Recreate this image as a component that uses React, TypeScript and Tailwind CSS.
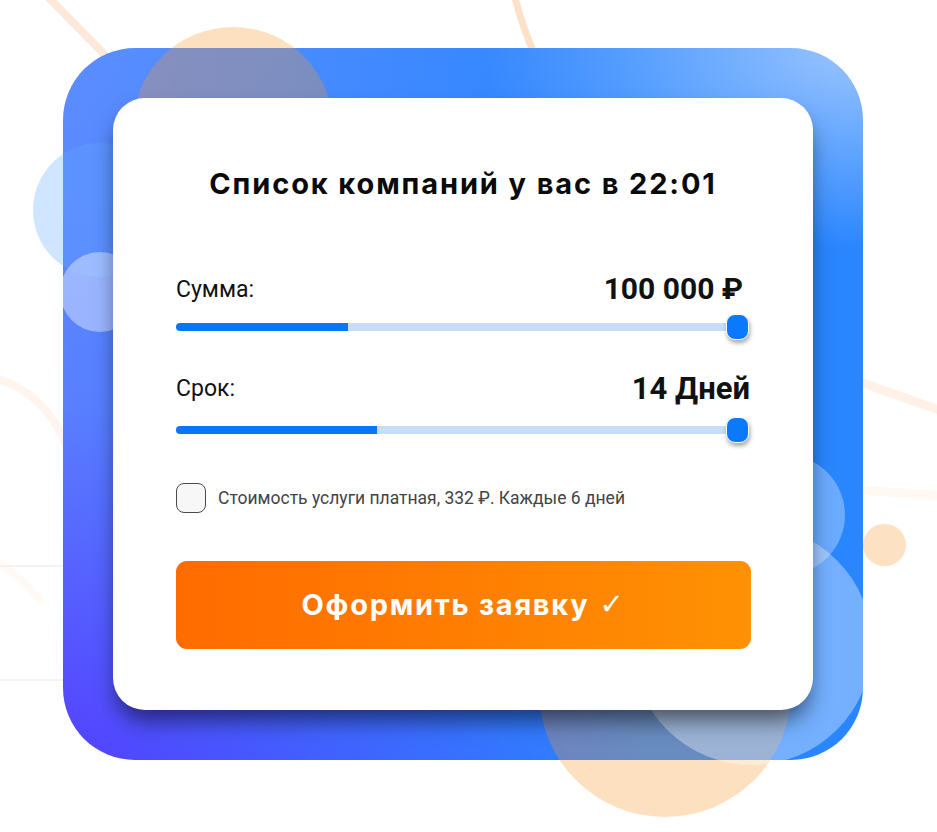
import React from "react";

function Slider({ filled }: { filled: number }) {
  return (
    <div className="relative h-[26px] w-full flex items-center">
      <div className="flex h-[8px] w-[568px]">
        <div className="h-full rounded-l-full bg-[#0a76f5]" style={{ width: filled }} />
        <div className="h-full flex-1 rounded-r-full bg-[#c8ddf8]" />
      </div>
      <div className="absolute right-[1px] top-0 h-[26px] w-[23px] rounded-[9px] border border-white bg-[#0a79fb] shadow-[1px_3px_4px_rgba(0,0,0,0.35)]" />
    </div>
  );
}

export default function App() {
  return (
    <div className="relative w-[937px] h-[832px] overflow-hidden bg-white pt-[48px] pl-[63px]">
      {/* faint background strokes */}
      <svg className="absolute left-0 top-0" width="937" height="832" viewBox="0 0 937 832" fill="none">
        <path d="M45 -6 L112 62" stroke="#fde9dc" strokeWidth="8" strokeLinecap="round" />
        <path d="M514 -6 Q522 26 536 58" stroke="#fde0c8" strokeWidth="7" strokeLinecap="round" />
        <path d="M860 382 L945 412" stroke="#fff1e7" strokeWidth="9" strokeLinecap="round" />
        <path d="M860 490 Q900 493 945 496" stroke="#fff8f3" strokeWidth="9" strokeLinecap="round" />
        <path d="M-6 378 Q45 392 66 445" stroke="#fff5ee" strokeWidth="8" strokeLinecap="round" />
        <path d="M-6 560 Q20 575 40 600" stroke="#fffaf6" strokeWidth="8" strokeLinecap="round" />
        <path d="M0 566 L63 566" stroke="#efefef" strokeWidth="1.5" />
        <path d="M0 680 L63 680" stroke="#efefef" strokeWidth="1.5" />
      </svg>

      {/* small peach dot */}
      <div className="absolute left-[863px] top-[524px] h-[42px] w-[43px] rounded-full bg-[#fde1c3]" />

      {/* translucent circles between frame and card */}
      <div className="absolute z-10 left-[133px] top-[27px] h-[200px] w-[200px] rounded-full bg-[rgba(248,153,48,0.3)]" />
      <div className="absolute z-10 left-[33px] top-[143px] h-[134px] w-[134px] rounded-full bg-[rgba(100,170,255,0.3)]" />
      <div className="absolute z-10 left-[60px] top-[252px] h-[80px] w-[80px] rounded-full bg-[rgba(255,255,255,0.4)]" />
      <div className="absolute z-10 left-[539px] top-[565px] h-[252px] w-[252px] rounded-full bg-[rgba(248,153,48,0.3)]" />
      <div className="absolute z-10 left-[725px] top-[455px] h-[120px] w-[120px] rounded-full bg-[rgba(255,255,255,0.3)]" />
      <div className="absolute z-10 left-[632px] top-[525px] h-[240px] w-[240px] rounded-full bg-[rgba(255,255,255,0.35)]" />

      {/* frame */}
      <div className="relative w-[800px] h-[712px] rounded-[72px] p-[50px] bg-[radial-gradient(ellipse_380px_200px_at_100%_0%,rgba(175,208,255,0.85),rgba(175,208,255,0)_100%),linear-gradient(to_right,rgba(42,134,255,0)_0%,rgba(42,134,255,1)_72%),linear-gradient(to_bottom,#5c8eff_0%,#5a7fff_50%,#5440ff_100%)]">
        <div className="relative z-20 flex h-[612px] w-[700px] flex-col rounded-[32px] bg-white px-[63px] pt-[69px] shadow-[0_14px_22px_-4px_rgba(0,0,0,0.55)]">
          <h1 className="text-center font-['Inter',sans-serif] text-[29px] font-bold leading-[34px] tracking-[0.065em] text-[#0a0a0a]">
            Список компаний у вас в 22:01
          </h1>

          <div className="mt-[70px] flex h-[36px] items-center justify-between font-['Roboto',sans-serif] text-[#111]">
            <span className="text-[23px] leading-none">Сумма:</span>
            <span className="mr-[7px] text-[30px] font-bold leading-none">100 000 ₽</span>
          </div>
          <div className="mt-[7px]">
            <Slider filled={172} />
          </div>

          <div className="mt-[30px] flex h-[36px] items-center justify-between font-['Roboto',sans-serif] text-[#111]">
            <span className="text-[23px] leading-none">Срок:</span>
            <span className="text-[31px] font-bold leading-none">14 Дней</span>
          </div>
          <div className="mt-[11px]">
            <Slider filled={201} />
          </div>

          <label className="mt-[40px] flex h-[30px] items-center gap-[12px] font-['Roboto',sans-serif]">
            <span className="h-[30px] w-[30px] rounded-[8px] border-[1.5px] border-[#4a4a4a] bg-[#f7f7f7]" />
            <span className="text-[17.5px] text-[#444]">Стоимость услуги платная, 332 ₽. Каждые 6 дней</span>
          </label>

          <button className="mt-[48px] flex h-[88px] w-[575px] items-center justify-center rounded-[11px] bg-[linear-gradient(to_right,#ff6b00,#ff9103)] font-['Inter',sans-serif] text-[29px] font-bold tracking-[0.06em] text-white">
            Оформить заявку <span className="ml-[10px] font-['DejaVu_Sans',sans-serif] font-bold">✓</span>
          </button>
        </div>
      </div>
    </div>
  );
}
